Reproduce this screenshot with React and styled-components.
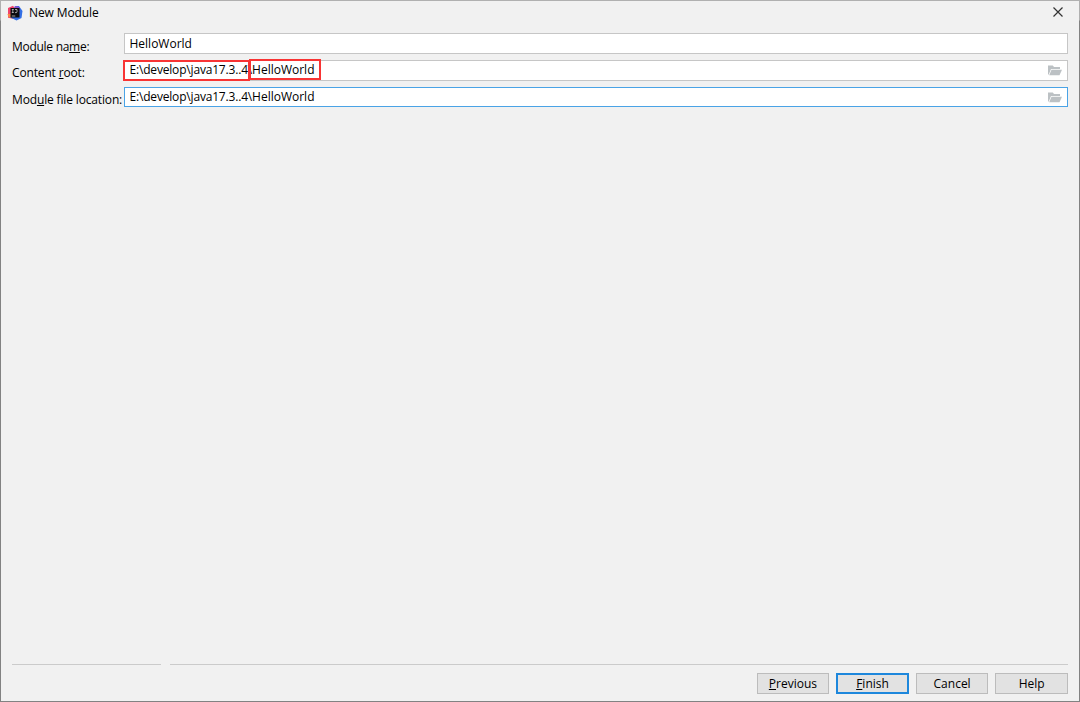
import React from "react";
import styled, { createGlobalStyle } from "styled-components";

const GlobalStyle = createGlobalStyle`
  * {
    box-sizing: border-box;
  }
  body {
    margin: 0;
    background: #f1f1f1;
  }
`;

const Dialog = styled.div`
  display: flex;
  flex-direction: column;
  width: 1080px;
  height: 702px;
  border: 1px solid #828282;
  border-image: linear-gradient(to bottom, #b0b0b0 20px, #828282 21px) 1;
  background: #f1f1f1;
  color: #000;
  font-family: "Open Sans", "Noto Sans", sans-serif;
  font-size: 12px;
  line-height: 16px;
`;

const TitleBar = styled.header`
  display: flex;
  align-items: center;
  height: 24px;
  padding: 0 14px 0 6px;
`;

const Title = styled.span`
  flex: 1;
  margin-left: 6px;
  letter-spacing: -0.1px;
`;

const CloseButton = styled.button`
  display: flex;
  padding: 0 0 2px;
  border: 0;
  background: none;
`;

const Form = styled.form`
  display: flex;
  flex: 1;
  flex-direction: column;
  gap: 6.2px;
  padding: 8.4px 11px 0;
`;

const Row = styled.div`
  display: flex;
  height: 20.5px;
`;

const Label = styled.label`
  flex: 0 0 112px;
  width: 112px;
  padding-top: 5.2px;
  letter-spacing: ${(props) => props.$spacing || "-0.15px"};
  white-space: nowrap;
`;

const Field = styled.div`
  display: flex;
  flex: 1;
  align-items: center;
  justify-content: space-between;
  padding: 0 5px 0 4.5px;
  border: 1px solid ${(props) => (props.$focused ? "#4aa3e6" : "#c6c6c6")};
  background: #fff;
`;

const Value = styled.span`
  position: relative;
  white-space: pre;
`;

const Folder = styled.span`
  letter-spacing: -0.18px;
`;

// red frame drawn over part of a path
const Marker = styled.span`
  position: absolute;
  top: ${(props) => props.$top}px;
  left: ${(props) => props.$left}px;
  width: ${(props) => props.$width}px;
  height: ${(props) => props.$height}px;
  border: 2px solid #f83434;
`;

const Separator = styled.div`
  display: grid;
  grid-template-columns: 149px 1fr;
  gap: 9px;
  padding: 0 11px;
`;

const Line = styled.div`
  height: 1px;
  background: #cbcbcb;
`;

const Footer = styled.footer`
  display: flex;
  justify-content: flex-end;
  gap: 7px;
  padding: 8px 11px 7px;
`;

const Button = styled.button`
  width: 72.6px;
  height: 21px;
  padding: 0;
  border: ${(props) => (props.$primary ? "2px solid #1d87dc" : "1px solid #bcbcbc")};
  background: #e2e2e2;
  color: inherit;
  font: inherit;
  line-height: 17px;
`;

const Mnemonic = styled.u`
  text-decoration-thickness: 1px;
  text-underline-offset: 1px;
`;

function AppLogo() {
  return (
    <svg width="16" height="16" viewBox="0 0 16 16">
      <path d="M1 3 6 .8l3 4-3 9-5-1z" fill="#f1436a" />
      <path d="m.5 9 4.5 0 2 5-5.5-2z" fill="#f78a43" />
      <path d="m8 1 4 0 3.5 5-1 7-5 2.5-6-3z" fill="#336fe5" />
      <path d="m8 1 4 1 1 5-6-2z" fill="#8d4cc9" />
      <rect x="3.5" y="3" width="9" height="9.5" fill="#0c0c10" />
      <path
        d="M4.8 4.5h2M5.8 4.5v3M4.8 7.5h2M8 4.5h2v2.3q0 .8-1 .8H8M4.8 11h3.5"
        fill="none"
        stroke="#ddd"
        strokeWidth=".7"
      />
    </svg>
  );
}

function FolderIcon() {
  return (
    <svg width="14" height="11" viewBox="0 0 14 11">
      <path d="M0 .5h4.8L6 2h6v2H3L.8 9.5H0z" fill="#bcc1c4" />
      <path d="M3.5 4.7H14L11.5 10.3H1.2z" fill="#bcc1c4" />
    </svg>
  );
}

function App() {
  return (
    <>
      <GlobalStyle />
      <Dialog>
        <TitleBar>
          <AppLogo />
          <Title>New Module</Title>
          <CloseButton aria-label="Close">
            <svg width="14" height="14" viewBox="0 0 14 14">
              <path d="M2.5 2.5l9 9M11.5 2.5l-9 9" stroke="#333" strokeWidth="1.2" />
            </svg>
          </CloseButton>
        </TitleBar>
        <Form>
          <Row>
            <Label $spacing="-0.28px">
              Module na<Mnemonic>m</Mnemonic>e:
            </Label>
            <Field>
              <Value>HelloWorld</Value>
            </Field>
          </Row>
          <Row>
            <Label>
              Content <Mnemonic>r</Mnemonic>oot:
            </Label>
            <Field>
              <Value>
                <Folder>{"E:\\develop\\java17.3..4\\"}</Folder>
                HelloWorld
                <Marker $top={-2} $left={-6.5} $width={127} $height={21} />
                <Marker $top={-3} $left={119.5} $width={72} $height={21} />
              </Value>
              <FolderIcon />
            </Field>
          </Row>
          <Row>
            <Label>
              Mod<Mnemonic>u</Mnemonic>le file location:
            </Label>
            <Field $focused>
              <Value>
                <Folder>{"E:\\develop\\java17.3..4\\"}</Folder>
                HelloWorld
              </Value>
              <FolderIcon />
            </Field>
          </Row>
        </Form>
        <Separator>
          <Line />
          <Line />
        </Separator>
        <Footer>
          <Button>
            <Mnemonic>P</Mnemonic>revious
          </Button>
          <Button $primary>
            <Mnemonic>F</Mnemonic>inish
          </Button>
          <Button>Cancel</Button>
          <Button>Help</Button>
        </Footer>
      </Dialog>
    </>
  );
}

export default App;
